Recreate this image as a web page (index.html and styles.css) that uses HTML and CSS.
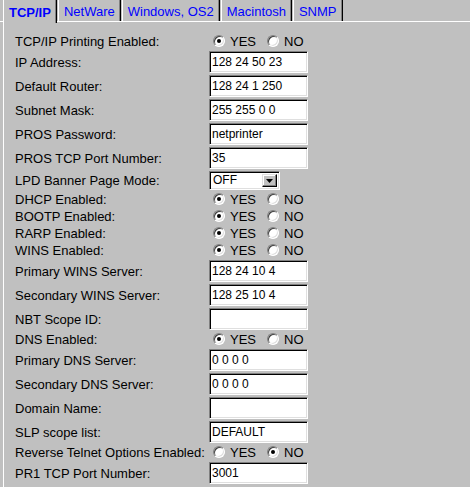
FILE: index.html
```html
<!DOCTYPE html>
<html>
<head>
<meta charset="utf-8">
<link rel="stylesheet" href="styles.css">
</head>
<body>
<div class="tabs">
  <div class="tab active">TCP/IP</div>
  <div class="tab">NetWare</div>
  <div class="tab">Windows, OS2</div>
  <div class="tab">Macintosh</div>
  <div class="tab">SNMP</div>
</div>
<div class="panel">
  <table class="form">
    <tr class="r-radio"><td class="lbl">TCP/IP Printing Enabled:</td><td><span class="radio on"></span><span class="rl">YES</span><span class="radio"></span><span class="rl">NO</span></td></tr>
    <tr class="r-input"><td class="lbl">IP Address:</td><td><input class="field" type="text" value="128 24 50 23"></td></tr>
    <tr class="r-input"><td class="lbl">Default Router:</td><td><input class="field" type="text" value="128 24 1 250"></td></tr>
    <tr class="r-input"><td class="lbl">Subnet Mask:</td><td><input class="field" type="text" value="255 255 0 0"></td></tr>
    <tr class="r-input"><td class="lbl">PROS Password:</td><td><input class="field" type="text" value="netprinter"></td></tr>
    <tr class="r-input"><td class="lbl">PROS TCP Port Number:</td><td><input class="field" type="text" value="35"></td></tr>
    <tr class="r-select"><td class="lbl">LPD Banner Page Mode:</td><td><div class="select"><span class="sel-val">OFF</span><span class="sel-btn"><svg width="7" height="4" viewBox="0 0 7 4"><path d="M0 0H7L3.5 4Z" fill="#000"/></svg></span></div></td></tr>
    <tr class="r-radio"><td class="lbl">DHCP Enabled:</td><td><span class="radio on"></span><span class="rl">YES</span><span class="radio"></span><span class="rl">NO</span></td></tr>
    <tr class="r-radio"><td class="lbl">BOOTP Enabled:</td><td><span class="radio on"></span><span class="rl">YES</span><span class="radio"></span><span class="rl">NO</span></td></tr>
    <tr class="r-radio"><td class="lbl">RARP Enabled:</td><td><span class="radio on"></span><span class="rl">YES</span><span class="radio"></span><span class="rl">NO</span></td></tr>
    <tr class="r-radio"><td class="lbl">WINS Enabled:</td><td><span class="radio on"></span><span class="rl">YES</span><span class="radio"></span><span class="rl">NO</span></td></tr>
    <tr class="r-input"><td class="lbl">Primary WINS Server:</td><td><input class="field" type="text" value="128 24 10 4"></td></tr>
    <tr class="r-input"><td class="lbl">Secondary WINS Server:</td><td><input class="field" type="text" value="128 25 10 4"></td></tr>
    <tr class="r-input"><td class="lbl">NBT Scope ID:</td><td><input class="field" type="text" value=""></td></tr>
    <tr class="r-radio"><td class="lbl">DNS Enabled:</td><td><span class="radio on"></span><span class="rl">YES</span><span class="radio"></span><span class="rl">NO</span></td></tr>
    <tr class="r-input"><td class="lbl">Primary DNS Server:</td><td><input class="field" type="text" value="0 0 0 0"></td></tr>
    <tr class="r-input"><td class="lbl">Secondary DNS Server:</td><td><input class="field" type="text" value="0 0 0 0"></td></tr>
    <tr class="r-input"><td class="lbl">Domain Name:</td><td><input class="field" type="text" value=""></td></tr>
    <tr class="r-input"><td class="lbl">SLP scope list:</td><td><input class="field" type="text" value="DEFAULT"></td></tr>
    <tr class="r-radio"><td class="lbl">Reverse Telnet Options Enabled:</td><td><span class="radio"></span><span class="rl">YES</span><span class="radio on"></span><span class="rl">NO</span></td></tr>
    <tr class="r-input"><td class="lbl">PR1 TCP Port Number:</td><td><input class="field" type="text" value="3001"></td></tr>
  </table>
</div>
</body>
</html>
```
FILE: styles.css
```css
html, body {
  margin: 0;
  padding: 0;
  background: #c0c0c0;
  font-family: "Liberation Sans", Arial, sans-serif;
  font-size: 13px;
  color: #000;
  overflow: hidden;
  height: 100%;
}

.tabs {
  display: flex;
  align-items: stretch;
  height: 21px;
  padding-left: 3px;
  border-bottom: 1px solid #fff;
}

.tab {
  display: flex;
  align-items: center;
  padding: 1px 5px 0 5px;
  margin-right: 1px;
  border-left: 1px solid #fff;
  border-right: 1px solid #000;
  box-shadow: inset -1px 0 #808080;
  color: #0000ff;
  white-space: nowrap;
}

.tab.active {
  font-weight: bold;
  height: 22px;
  margin-bottom: -1px;
  background: #c0c0c0;
  position: relative;
}

.panel {
  margin-left: 3px;
  border-left: 1px solid #fff;
  padding-top: 11px;
  height: calc(100% - 33px);
}

.form {
  border-collapse: collapse;
}

.form td {
  padding: 0;
  vertical-align: middle;
  white-space: nowrap;
}

.form td.lbl {
  padding-left: 11px;
  width: 193px;
}

.r-radio td { height: 17px; }
.r-input td { height: 24px; }
.r-select td { height: 21px; }

.field {
  box-sizing: border-box;
  width: 99px;
  height: 22px;
  margin: 0 0 0 1px;
  padding: 0 2px;
  font-family: "Liberation Sans", Arial, sans-serif;
  font-size: 12px;
  color: #000;
  background: #fff;
  border-top: 1px solid #808080;
  border-left: 1px solid #808080;
  border-right: 1px solid #fff;
  border-bottom: 1px solid #fff;
  box-shadow: inset 1px 1px #000, inset -1px -1px #dfdfdf;
  outline: none;
  display: block;
}

.radio {
  display: inline-block;
  box-sizing: border-box;
  width: 12px;
  height: 12px;
  border-radius: 50%;
  background: #fff;
  border: 1px solid;
  border-color: #808080 #fff #fff #808080;
  box-shadow: inset 1px 1px #404040, inset -1px -1px #dfdfdf;
  vertical-align: -1px;
  margin-left: 5px;
  position: relative;
}

.radio.on::after {
  content: "";
  position: absolute;
  left: 3px;
  top: 3px;
  width: 4px;
  height: 4px;
  border-radius: 50%;
  background: #000;
}

.rl {
  margin-left: 5px;
  margin-right: 6px;
}

.select {
  display: flex;
  box-sizing: border-box;
  width: 71px;
  height: 19px;
  margin-left: 1px;
  background: #fff;
  border-top: 1px solid #808080;
  border-left: 1px solid #808080;
  border-right: 1px solid #fff;
  border-bottom: 1px solid #fff;
  box-shadow: inset 1px 1px #000, inset -1px -1px #dfdfdf;
  padding: 2px;
  font-size: 12px;
}

.sel-val {
  flex: 1;
  line-height: 13px;
  padding-left: 1px;
}

.sel-btn {
  width: 15px;
  height: 13px;
  box-sizing: border-box;
  background: #c0c0c0;
  border-top: 1px solid #dfdfdf;
  border-left: 1px solid #dfdfdf;
  border-right: 1px solid #000;
  border-bottom: 1px solid #000;
  box-shadow: inset -1px -1px #808080, inset 1px 1px #fff;
  display: flex;
  align-items: center;
  justify-content: center;
}
```
